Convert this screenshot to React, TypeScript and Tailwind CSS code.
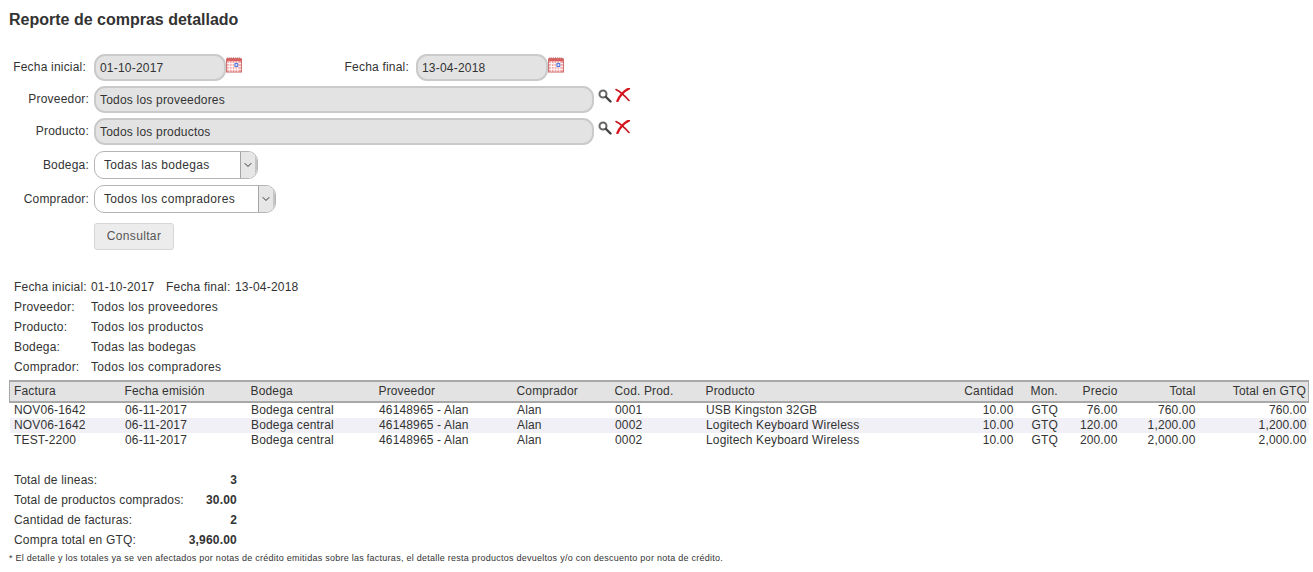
import React from "react";
import { ChevronDown } from "lucide-react";

const rows = [
  ["NOV06-1642", "06-11-2017", "Bodega central", "46148965 - Alan", "Alan", "0001", "USB Kingston 32GB", "10.00", "GTQ", "76.00", "760.00", "760.00"],
  ["NOV06-1642", "06-11-2017", "Bodega central", "46148965 - Alan", "Alan", "0002", "Logitech Keyboard Wireless", "10.00", "GTQ", "120.00", "1,200.00", "1,200.00"],
  ["TEST-2200", "06-11-2017", "Bodega central", "46148965 - Alan", "Alan", "0002", "Logitech Keyboard Wireless", "10.00", "GTQ", "200.00", "2,000.00", "2,000.00"],
];

const headers = ["Factura", "Fecha emisión", "Bodega", "Proveedor", "Comprador", "Cod. Prod.", "Producto", "Cantidad", "Mon.", "Precio", "Total", "Total en GTQ"];

const colWidths = ["w-[111px]", "w-[126px]", "w-[128px]", "w-[138px]", "w-[98px]", "w-[91px]", "w-[250px]", "w-[64px]", "w-[45px]", "w-[60px]", "w-[77px]", "w-[111px]"];

const cellAlign = (i: number, head: boolean) => {
  if (i === 8) return head ? "text-left pl-[15px]" : "text-left pl-[16px]";
  if (i === 9) return "text-right pr-[3px]";
  if (i > 6) return "text-right pr-[2px]";
  return head ? "text-left pl-[4px]" : "text-left pl-[4.5px]";
};

const CalendarIcon = () => (
  <svg width="16" height="16" viewBox="0 0 17 16" className="shrink-0 mt-[3px]">
    <rect x="0.5" y="1.5" width="16" height="14" fill="#f4a9a9" stroke="#c96a6a" />
    <rect x="1" y="1" width="15" height="3" fill="#d65f5f" />
    <path d="M2 1V0M4 1V0M6 1V0M8 1V0M10 1V0M12 1V0M14 1V0" stroke="#b04040" />
    <path d="M1 6.5H16M1 9.5H16M1 12.5H16M3.5 4V15M6.5 4V15M9.5 4V15M12.5 4V15" stroke="#fff" />
    <rect x="9.5" y="6.5" width="3" height="3" fill="#dfe8ff" stroke="#3d6fe0" />
  </svg>
);

const SearchIcon = () => (
  <svg width="14" height="14" viewBox="0 0 14 14">
    <circle cx="5" cy="5" r="3.5" fill="#fff" stroke="#666" strokeWidth="2" />
    <path d="M8 8L12.5 12.5" stroke="#444" strokeWidth="2.4" strokeLinecap="round" />
  </svg>
);

const RemoveIcon = () => (
  <svg width="15" height="14" viewBox="0 0 15 14" className="-mt-[1px]">
    <path d="M1 1.5C5 3.5 10 8 14 12.5" stroke="#c8141c" strokeWidth="1.6" fill="none" strokeLinecap="round" />
    <path d="M14 0.5C9 3 5 7 2.5 13" stroke="#d8141c" strokeWidth="2.4" fill="none" strokeLinecap="round" />
  </svg>
);

const Label = ({ children, width = "w-[89px]" }: { children: React.ReactNode; width?: string }) => (
  <label className={`${width} shrink-0 text-right`}>{children}</label>
);

const TextBox = ({ value, width }: { value: string; width: string }) => (
  <div className={`${width} h-[27px] ml-[5px] shrink-0 flex items-center pl-[4px] rounded-[11px] border-2 border-[#cacaca] bg-[#e3e3e3]`}>
    {value}
  </div>
);

const SelectBox = ({ value, width }: { value: string; width: string }) => (
  <div className={`${width} h-[28px] ml-[5px] shrink-0 flex items-stretch rounded-[10px] border border-[#b5b5b5] overflow-hidden bg-white`}>
    <span className="flex-1 flex items-center pl-[9px] tracking-[0.33px]">{value}</span>
    <span className="w-[17px] flex items-center justify-center bg-[#e6e6e6] border-l border-[#a5a5a5] border-r-2 border-r-[#c4c4c4]">
      <ChevronDown size={12} strokeWidth={2} color="#333" />
    </span>
  </div>
);

const Info = ({ label, value }: { label: string; value: string }) => (
  <div className="flex h-[20px] items-center pl-[14px]">
    <span className="w-[77px]">{label}</span>
    <span className="tracking-[0.3px]">{value}</span>
  </div>
);

const Total = ({ label, value }: { label: string; value: string }) => (
  <div className="flex h-[20px] w-[237px] items-center justify-between pl-[14px]">
    <span>{label}</span>
    <b className="font-bold">{value}</b>
  </div>
);

export default function App() {
  return (
    <div className="h-[572px] overflow-hidden bg-white text-[12px] tracking-[0.2px] text-[#333] font-['Liberation_Sans',Arial,sans-serif]">
      <h1 className="pl-[9px] pt-[11px] h-[54px] text-[16px] leading-[18px] font-bold tracking-normal">
        Reporte de compras detallado
      </h1>

      {/* Filtros */}
      <div className="flex flex-col">
        <div className="flex items-start h-[32px]">
          <Label>
            <span className="leading-[27px] pr-[3px]">Fecha inicial:</span>
          </Label>
          <TextBox value="01-10-2017" width="w-[132px]" />
          <CalendarIcon />
          <span className="ml-[101px] w-[66px] whitespace-nowrap leading-[27px] text-right">Fecha final:</span>
          <div className="ml-[2px]">
            <TextBox value="13-04-2018" width="w-[132px]" />
          </div>
          <CalendarIcon />
        </div>
        <div className="flex items-start h-[32px]">
          <Label>
            <span className="leading-[27px]">Proveedor:</span>
          </Label>
          <TextBox value="Todos los proveedores" width="w-[500px]" />
          <div className="flex gap-[3px] ml-[4px] mt-[3px]">
            <SearchIcon />
            <RemoveIcon />
          </div>
        </div>
        <div className="flex items-start h-[33px]">
          <Label>
            <span className="leading-[27px]">Producto:</span>
          </Label>
          <TextBox value="Todos los productos" width="w-[500px]" />
          <div className="flex gap-[3px] ml-[4px] mt-[3px]">
            <SearchIcon />
            <RemoveIcon />
          </div>
        </div>
        <div className="flex items-start h-[34px]">
          <Label>
            <span className="leading-[28px]">Bodega:</span>
          </Label>
          <SelectBox value="Todas las bodegas" width="w-[164px]" />
        </div>
        <div className="flex items-start h-[38px]">
          <Label>
            <span className="leading-[28px]">Comprador:</span>
          </Label>
          <SelectBox value="Todos los compradores" width="w-[182px]" />
        </div>
        <div className="pl-[94px]">
          <button className="w-[80px] h-[27px] pb-[2px] rounded-[3px] border border-[#d6d6d6] bg-[#ececec] text-[#555] tracking-[0.35px]">
            Consultar
          </button>
        </div>
      </div>

      {/* Resumen de filtros */}
      <div className="mt-[27px]">
        <div className="flex h-[20px] items-center pl-[14px]">
          <span className="w-[77px]">Fecha inicial:</span>
          <span className="w-[75px]">01-10-2017</span>
          <span className="w-[69px]">Fecha final:</span>
          <span>13-04-2018</span>
        </div>
        <Info label="Proveedor:" value="Todos los proveedores" />
        <Info label="Producto:" value="Todos los productos" />
        <Info label="Bodega:" value="Todas las bodegas" />
        <Info label="Comprador:" value="Todos los compradores" />
      </div>

      {/* Detalle */}
      <div className="mt-[3px] ml-[9px]">
        <table className="w-[1299px] table-fixed border-collapse tracking-[0.15px]">
          <colgroup>
            {colWidths.map((w, i) => (
              <col key={i} className={w} />
            ))}
          </colgroup>
          <thead>
            <tr className="h-[21px] bg-[#e3e3e3]">
              {headers.map((h, i) => (
                <th key={h} className={`font-normal p-0 leading-[15px] border-y-2 border-[#a8a8a8] first:border-l first:border-l-[#a8a8a8] last:border-r last:border-r-[#a8a8a8] ${cellAlign(i, true)}`}>
                  {h}
                </th>
              ))}
            </tr>
          </thead>
          <tbody>
            {rows.map((row, r) => (
              <tr key={r} className={`h-[15px] leading-[15px] ${r === 1 ? "bg-[#f0f0f6]" : ""}`}>
                {row.map((c, i) => (
                  <td key={i} className={`p-0 ${cellAlign(i, false)}`}>
                    {c}
                  </td>
                ))}
              </tr>
            ))}
          </tbody>
        </table>
      </div>

      {/* Totales */}
      <div className="mt-[22px]">
        <Total label="Total de lineas:" value="3" />
        <Total label="Total de productos comprados:" value="30.00" />
        <Total label="Cantidad de facturas:" value="2" />
        <Total label="Compra total en GTQ:" value="3,960.00" />
      </div>
      <p className="pl-[9px] mt-[3px] text-[9px] leading-[11px] tracking-[0.26px]">
        * El detalle y los totales ya se ven afectados por notas de crédito emitidas sobre las facturas, el detalle resta productos devueltos y/o con descuento por nota de crédito.
      </p>
    </div>
  );
}
